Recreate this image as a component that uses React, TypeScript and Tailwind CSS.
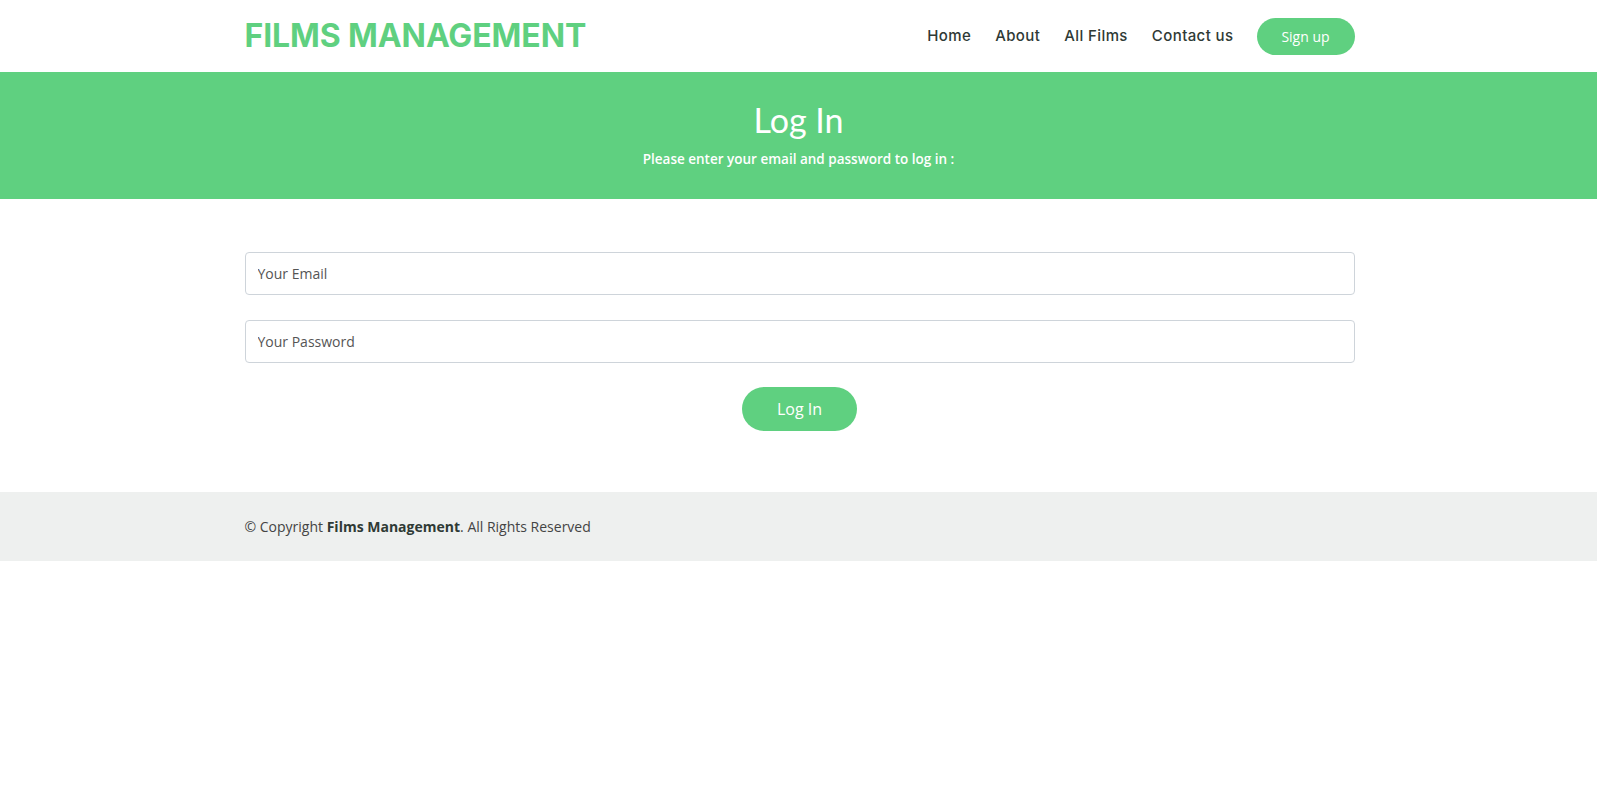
const nav = ["Home", "About", "All Films", "Contact us"];

export default function App() {
  return (
    <div className="min-h-screen bg-white font-['Open_Sans',sans-serif] text-[#444]">
      <header className="h-[72px] bg-white">
        <div className="mx-auto flex h-full w-[1110px] translate-x-[1px] items-center justify-between">
          <div className="font-['Inter',sans-serif] text-[32px] font-bold tracking-[-0.1px] text-[#5fd080]">
            FILMS MANAGEMENT
          </div>
          <nav className="flex items-center">
            {nav.map((n) => (
              <a
                key={n}
                className="ml-[24px] font-['Inter',sans-serif] text-[15px] font-medium tracking-[0.4px] text-[#2f3a35]"
              >
                {n}
              </a>
            ))}
            <a className="ml-[23px] flex h-[37px] w-[98px] items-center justify-center rounded-full bg-[#5fd080] text-[14px] text-white">
              Sign up
            </a>
          </nav>
        </div>
      </header>

      <section className="flex h-[127px] flex-col items-center bg-[#5fd080] pt-[25px] text-white">
        <h1 className="font-['Lato',sans-serif] text-[34px] leading-[46px]">Log In</h1>
        <p className="mt-[6px] text-[13.5px] font-semibold">
          Please enter your email and password to log in :
        </p>
      </section>

      <main className="mx-auto flex w-[1110px] translate-x-[1px] flex-col pt-[53px] pb-[61px]">
        <input
          placeholder="Your Email"
          className="h-[43px] rounded-[4px] border border-[#ced4da] px-[12px] text-[14px] text-[#555] placeholder:text-[#555] outline-none"
        />
        <input
          type="password"
          placeholder="Your Password"
          className="mt-[25px] h-[43px] rounded-[4px] border border-[#ced4da] px-[12px] text-[14px] text-[#555] placeholder:text-[#555] outline-none"
        />
        <button className="mx-auto mt-[24px] h-[44px] w-[115px] rounded-full bg-[#5fd080] text-[16px] text-white">
          Log In
        </button>
      </main>

      <footer className="h-[69px] bg-[#eef0ef]">
        <div className="mx-auto flex h-full w-[1110px] translate-x-[1px] items-center text-[14px] text-[#444]">
          <span>
            © Copyright <strong className="font-bold text-[#2f3a35]">Films Management</strong>. All
            Rights Reserved
          </span>
        </div>
      </footer>
    </div>
  );
}
